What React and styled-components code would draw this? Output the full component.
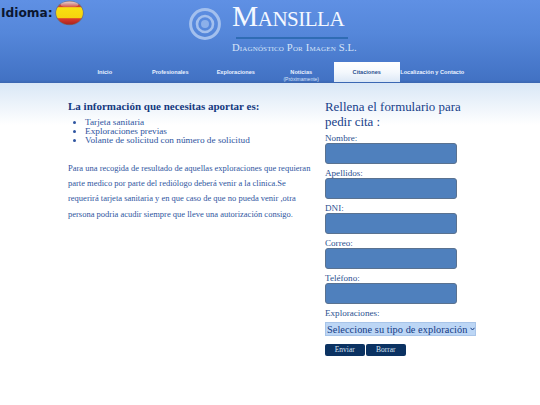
import React from "react";
import styled, { createGlobalStyle } from "styled-components";

const Global = createGlobalStyle`
  html, body { margin: 0; padding: 0; background: #fff; }
  body { font-family: "Liberation Serif", serif; color: #123a80; }
  * { box-sizing: border-box; }
`;

const Page = styled.div`
  width: 540px;
  height: 405px;
  overflow: hidden;
  position: relative;
`;

const Header = styled.header`
  height: 83px;
  background: linear-gradient(180deg, #5f90e4 0%, #5587da 40%, #4272c4 96%, #3a66b0 100%);
  display: flex;
  flex-direction: column;
`;

const Language = styled.div`
  position: absolute;
  left: 1px;
  top: 0;
  display: flex;
  align-items: center;
  gap: 2px;
  font-family: "DejaVu Sans", sans-serif;
  font-size: 12.2px;
  font-weight: 700;
  color: #0b1730;
`;

const Brand = styled.div`
  height: 62px;
  padding: 0 0 0 188px;
  display: flex;
  gap: 10px;
`;

const LogoMark = styled.svg`
  width: 34px;
  height: 34px;
  margin-top: 7px;
  flex: none;
`;

const BrandText = styled.div`
  display: flex;
  flex-direction: column;
  color: #fff;
`;

const Title = styled.div`
  font-size: 29.5px;
  font-variant: small-caps;
  line-height: 32px;
  letter-spacing: -0.5px;
  white-space: nowrap;
  color: #f4f8ff;
`;

const Rule = styled.div`
  width: 112px;
  height: 2px;
  margin: 5px 0 0 4px;
  background: #2f6cb4;
`;

const Subtitle = styled.div`
  font-size: 10.6px;
  font-variant: small-caps;
  letter-spacing: 0.15px;
  line-height: 13px;
  margin-top: 2px;
  white-space: nowrap;
  color: #d8e4f8;
`;

const Nav = styled.nav`
  display: flex;
  padding-left: 72px;
  height: 21px;
`;

const NavItem = styled.div`
  width: 65.5px;
  height: 20px;
  padding-top: 7px;
  display: flex;
  flex-direction: column;
  align-items: center;
  font-family: "Liberation Sans", sans-serif;
  font-size: 5.6px;
  line-height: 6.5px;
  font-weight: 700;
  white-space: nowrap;
  color: ${(p) => (p.$active ? "#2a4f8f" : "#eaf1ff")};
  background: ${(p) => (p.$active ? "linear-gradient(180deg, #ffffff 0%, #f4f8fd 50%, #dce8f6 100%)" : "transparent")};
`;

const NavNote = styled.span`
  font-size: 5px;
  font-weight: 400;
  color: #d5e2f8;
`;

const Fade = styled.main`
  display: flex;
  padding: 17px 0 0 68px;
  height: 322px;
  background: linear-gradient(180deg, #d9e7f6 0px, #ffffff 42px);
`;

const LeftColumn = styled.section`
  width: 257px;
  flex: none;
`;

const InfoHeading = styled.h3`
  margin: 0;
  font-size: 11px;
  line-height: 13px;
  font-weight: 700;
  color: #14397f;
`;

const InfoList = styled.ul`
  margin: 5px 0 0;
  padding: 0 0 0 17px;
  font-size: 9.25px;
  line-height: 9px;
  color: #2f55a0;
`;

const InfoText = styled.p`
  margin: 16px 0 0;
  width: 245px;
  font-size: 8.5px;
  line-height: 15.2px;
  color: #2f55a0;
`;

const RightColumn = styled.section`
  width: 152px;
  flex: none;
`;

const FormTitle = styled.h2`
  margin: 0;
  font-size: 12.9px;
  line-height: 14.5px;
  font-weight: 400;
  color: #183f8a;
`;

const Label = styled.label`
  display: block;
  margin-top: 4px;
  font-size: 9.1px;
  line-height: 10px;
  color: #2a4f8f;
`;

const Field = styled.input`
  display: block;
  width: 132px;
  height: 21px;
  padding: 0;
  background: #4f80bd;
  border: 1px solid #5a7290;
  border-radius: 3px;
  outline: none;
`;

const SelectWrap = styled.div`
  position: relative;
  width: 151px;
  height: 14px;
  margin-top: 4px;
`;

const SelectBox = styled.select`
  appearance: none;
  display: block;
  width: 100%;
  height: 100%;
  padding: 0 0 0 1px;
  font-family: "Liberation Serif", serif;
  font-size: 10.3px;
  letter-spacing: 0.06px;
  color: #143a85;
  background: #bcd6f5;
  border: 1px solid #a8c4e8;
`;

const Chevron = styled.svg`
  position: absolute;
  right: 1px;
  top: 5px;
  width: 5px;
  height: 4px;
  pointer-events: none;
`;

const Buttons = styled.div`
  display: flex;
  gap: 1.5px;
  margin-top: 8px;
`;

const Btn = styled.button`
  width: 39.5px;
  height: 12px;
  padding: 0;
  font-family: "Liberation Serif", serif;
  font-size: 7.5px;
  line-height: 10px;
  color: #d7e3f4;
  background: #0b3262;
  border: none;
  border-radius: 2px;
`;

const Flag = () => (
  <svg width="29" height="26" viewBox="0 0 29 26">
    <defs>
      <linearGradient id="fl" x1="0" y1="0" x2="0" y2="1">
        <stop offset="0" stopColor="#b05a5a" />
        <stop offset="0.22" stopColor="#d0402f" />
        <stop offset="0.27" stopColor="#f8e010" />
        <stop offset="0.7" stopColor="#f6d40e" />
        <stop offset="0.75" stopColor="#dc3a2a" />
        <stop offset="1" stopColor="#a82420" />
      </linearGradient>
      <linearGradient id="gl" x1="0" y1="0" x2="0" y2="1">
        <stop offset="0" stopColor="#fff" stopOpacity="0.7" />
        <stop offset="1" stopColor="#fff" stopOpacity="0.05" />
      </linearGradient>
    </defs>
    <ellipse cx="14.5" cy="13" rx="14.2" ry="12.2" fill="#6b7280" />
    <ellipse cx="14.5" cy="13" rx="13.4" ry="11.5" fill="url(#fl)" />
    <ellipse cx="14.5" cy="4.6" rx="9" ry="3" fill="url(#gl)" />
  </svg>
);

const Logo = () => (
  <LogoMark viewBox="0 0 34 34">
    <circle cx="17" cy="17" r="14.4" fill="none" stroke="#a3c0ee" strokeWidth="3" />
    <circle cx="17" cy="17" r="8" fill="none" stroke="#a3c0ee" strokeWidth="2.6" />
    <circle cx="17" cy="17" r="4" fill="#8cb0ea" />
  </LogoMark>
);

const fields = ["Nombre:", "Apellidos:", "DNI:", "Correo:", "Teléfono:"];

export default function App() {
  return (
    <Page>
      <Global />
      <Language>
        <span>Idioma:</span>
        <Flag />
      </Language>
      <Header>
        <Brand>
          <Logo />
          <BrandText>
            <Title>Mansilla</Title>
            <Rule />
            <Subtitle>Diagnóstico Por Imagen S.L.</Subtitle>
          </BrandText>
        </Brand>
        <Nav>
          <NavItem>Inicio</NavItem>
          <NavItem>Profesionales</NavItem>
          <NavItem>Exploraciones</NavItem>
          <NavItem>
            Noticias
            <NavNote>(Próximamente)</NavNote>
          </NavItem>
          <NavItem $active>Citaciones</NavItem>
          <NavItem>Localización y Contacto</NavItem>
        </Nav>
      </Header>
      <Fade>
        <LeftColumn>
          <InfoHeading>La información que necesitas aportar es:</InfoHeading>
          <InfoList>
            <li>Tarjeta sanitaria</li>
            <li>Exploraciones previas</li>
            <li>Volante de solicitud con número de solicitud</li>
          </InfoList>
          <InfoText>
            Para una recogida de resultado de aquellas exploraciones que requieran parte medico por parte del rediólogo deberá venir a la clinica.Se requerirá tarjeta sanitaria y en que caso de que no pueda venir ,otra persona podria acudir siempre que lleve una autorización consigo.
          </InfoText>
        </LeftColumn>
        <RightColumn>
          <FormTitle>Rellena el formulario para pedir cita :</FormTitle>
          {fields.map((f) => (
            <React.Fragment key={f}>
              <Label>{f}</Label>
              <Field type="text" />
            </React.Fragment>
          ))}
          <Label>Exploraciones:</Label>
          <SelectWrap>
            <SelectBox defaultValue="x">
              <option value="x">Seleccione su tipo de exploración</option>
            </SelectBox>
            <Chevron viewBox="0 0 5 4">
              <path d="M0.5 0.8 L2.5 3 L4.5 0.8" fill="none" stroke="#143a85" strokeWidth="1" />
            </Chevron>
          </SelectWrap>
          <Buttons>
            <Btn type="button">Enviar</Btn>
            <Btn type="button">Borrar</Btn>
          </Buttons>
        </RightColumn>
      </Fade>
    </Page>
  );
}
